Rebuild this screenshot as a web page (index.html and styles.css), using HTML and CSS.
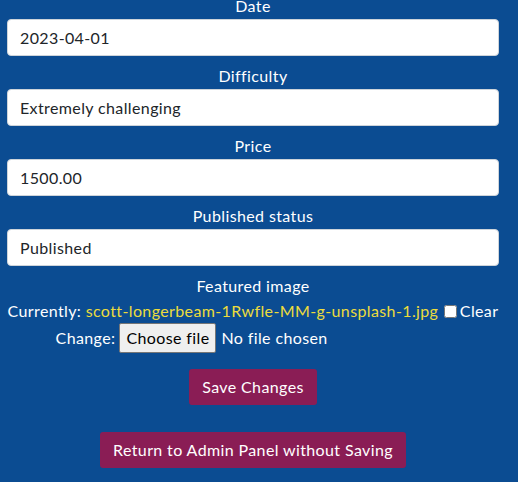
FILE: index.html
```html
<!DOCTYPE html>
<html lang="en">
<head>
<meta charset="utf-8">
<title>Edit Trip</title>
<link rel="stylesheet" href="styles.css">
</head>
<body>
<form class="edit-form">
  <label class="field-label" for="date">Date</label>
  <input class="field-input" id="date" type="text" value="2023-04-01">

  <label class="field-label" for="difficulty">Difficulty</label>
  <input class="field-input" id="difficulty" type="text" value="Extremely challenging">

  <label class="field-label" for="price">Price</label>
  <input class="field-input" id="price" type="text" value="1500.00">

  <label class="field-label" for="status">Published status</label>
  <input class="field-input" id="status" type="text" value="Published">

  <div class="field-label">Featured image</div>
  <div class="image-row">Currently: <a class="image-link" href="#">scott-longerbeam-1Rwfle-MM-g-unsplash-1.jpg</a> <input class="clear-box" type="checkbox" id="clear"><label for="clear">Clear</label></div>
  <div class="image-row change-row">Change: <label class="file-input"><span class="file-btn">Choose file</span><span class="file-name">No file chosen</span><input class="file-real" type="file"></label></div>

  <div class="actions">
    <button class="btn" type="submit">Save Changes</button>
    <a class="btn btn-return" href="#">Return to Admin Panel without Saving</a>
  </div>
</form>
</body>
</html>
```
FILE: styles.css
```css
html, body {
  margin: 0;
  padding: 0;
  background: #0b4c92;
}
body {
  font-family: Lato, "Open Sans", sans-serif;
  font-size: 16px;
  letter-spacing: 0.38px;
  color: #ffffff;
}
.edit-form {
  width: 492px;
  margin: -14px 0 0 7px;
  display: flex;
  flex-direction: column;
  text-align: center;
}
.field-label {
  display: block;
  line-height: 24px;
  margin-top: 8px;
  margin-bottom: 1px;
}
.field-input {
  box-sizing: border-box;
  width: 100%;
  height: 37px;
  margin: 0;
  padding: 0 12px;
  border: 1px solid #ced4da;
  border-radius: 4px;
  background: #ffffff;
  color: #212529;
  font-family: inherit;
  font-size: 16px;
  letter-spacing: inherit;
}
.image-row {
  line-height: 24px;
  white-space: nowrap;
}
.image-link {
  color: #ecdc3c;
  text-decoration: none;
}
.clear-box {
  width: 13px;
  height: 13px;
  margin: 0 3px 0 1px;
  vertical-align: -1px;
}
.change-row {
  height: 30px;
  display: flex;
  justify-content: center;
  align-items: center;
  gap: 4px;
}
.file-input {
  width: 331px;
  display: flex;
  align-items: center;
  gap: 5px;
  text-align: left;
}
.file-btn {
  box-sizing: border-box;
  height: 30px;
  padding: 0 6px;
  line-height: 28px;
  background: #efefef;
  color: #000000;
  border: 1px solid #767676;
  border-radius: 2px;
}
.file-real {
  display: none;
}
.actions {
  display: flex;
  flex-direction: column;
  align-items: center;
  gap: 27px;
  margin-top: 16px;
}
.btn {
  box-sizing: border-box;
  height: 36px;
  padding: 0 13px;
  border: none;
  border-radius: 3px;
  background: #8a1d55;
  color: #ffffff;
  font-family: inherit;
  font-size: 16px;
  letter-spacing: inherit;
  line-height: 36px;
  text-decoration: none;
  cursor: pointer;
}
```
